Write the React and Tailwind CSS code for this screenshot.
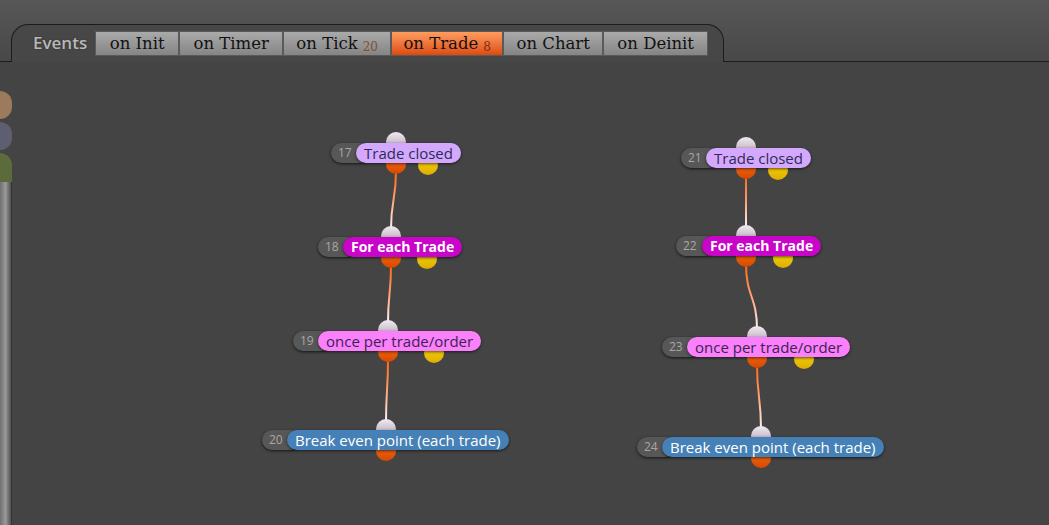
import React from 'react';

const OY = 62; // canvas top in page coords

const nodes = [
    { id: 17, numX: 331, labelX: 356, top: 143, cx: 396, yx: 428, text: 'Trade closed', kind: 'closed' },
    { id: 18, numX: 318, labelX: 343, top: 237, cx: 391, yx: 427, text: 'For each Trade', kind: 'loop' },
    { id: 19, numX: 293, labelX: 318, top: 331, cx: 388, yx: 434, text: 'once per trade/order', kind: 'once' },
    { id: 20, numX: 262, labelX: 287, top: 430, cx: 386, yx: null, text: 'Break even point (each trade)', kind: 'action' },
    { id: 21, numX: 681, labelX: 706, top: 148, cx: 746, yx: 778, text: 'Trade closed', kind: 'closed' },
    { id: 22, numX: 676, labelX: 702, top: 236, cx: 746, yx: 783, text: 'For each Trade', kind: 'loop' },
    { id: 23, numX: 662, labelX: 687, top: 337, cx: 757, yx: 804, text: 'once per trade/order', kind: 'once' },
    { id: 24, numX: 637, labelX: 662, top: 437, cx: 761, yx: null, text: 'Break even point (each trade)', kind: 'action' },
];

const links = [[17, 18], [18, 19], [19, 20], [21, 22], [22, 23], [23, 24]];

const labelStyles = {
    closed: 'bg-[#d4a9fd] text-[#2c2c58] text-[15px]',
    loop: 'bg-[#c805c8] text-white font-bold text-[14px]',
    once: 'bg-[#fb80fb] text-[#3a2450] text-[15px]',
    action: 'bg-[#4581b6] text-white text-[15px]',
};

const tabs = [
    { name: 'on Init', w: 'w-[84px]' },
    { name: 'on Timer', w: 'w-[104px]' },
    { name: 'on Tick', w: 'w-[108px]', count: 20 },
    { name: 'on Trade', w: 'w-[112px]', count: 8, active: true },
    { name: 'on Chart', w: 'w-[100px]' },
    { name: 'on Deinit', w: 'w-[105px]' },
];

const byId = (id) => nodes.find(n => n.id === id);

const Node = ({ node }) => {
    const top = node.top - OY;
    return (
        <>
            {/* input connector */}
            <div
                className="absolute w-[20px] h-[20px] rounded-full bg-linear-to-b from-[#f2eaf2] to-[#a999ab]"
                style={{ left: node.cx - 10, top: top - 11 }}
            />
            {/* output connectors */}
            <div
                className="absolute w-[20px] h-[20px] rounded-full bg-linear-to-b from-[#ff7418] to-[#d64800]"
                style={{ left: node.cx - 10, top: top + 11 }}
            />
            {node.yx && (
                <div
                    className="absolute w-[20px] h-[20px] rounded-full bg-linear-to-b from-[#ffdc10] to-[#dcae00]"
                    style={{ left: node.yx - 10, top: top + 12 }}
                />
            )}
            <div className="absolute flex items-center h-[20px]" style={{ left: node.numX, top }}>
                <div
                    className="h-[20px] rounded-full bg-[#575757] text-[#a8a8a8] text-[12px] leading-[20px] pl-[7px] shadow-[0_1px_3px_rgba(0,0,0,0.7)]"
                    style={{ width: node.labelX - node.numX + 14 }}
                >
                    {node.id}
                </div>
                <div
                    className={`relative -ml-[14px] h-[20px] rounded-full px-[8px] leading-[20px] whitespace-nowrap shadow-[0_1px_3px_rgba(0,0,0,0.6)] ${labelStyles[node.kind]}`}
                >
                    {node.text}
                </div>
            </div>
        </>
    );
};

export default function App() {
    return (
        <div className="w-[1049px] h-[525px] overflow-hidden flex flex-col bg-[#444444] font-['Open_Sans',sans-serif]">
            {/* Header with Events tab */}
            <div className="h-[62px] flex items-end bg-linear-to-b from-[#575757] to-[#484848]">
                <div className="w-[11px] h-full border-b border-[#1c1c1c]" />
                <div className="w-[713px] h-[38px] border-t border-x border-[#1c1c1c] rounded-t-[17px] bg-[#474747] flex items-start pt-[6px] pl-[21px]">
                    <span className="text-[17px] leading-[24px] font-semibold text-[#b9b9b9] [text-shadow:0_0_2px_rgba(0,0,0,0.4)] mr-[8px]">
                        Events
                    </span>
                    <div className="flex">
                        {tabs.map(t => (
                            <div
                                key={t.name}
                                className={`${t.w} h-[25px] flex items-center justify-center border border-[#5a5a5a] font-['DejaVu_Serif',serif] text-[16.5px] leading-[22px] text-[#111] ${
                                    t.active
                                        ? 'bg-linear-to-b from-[#ff9c5e] to-[#dc4a0a]'
                                        : 'bg-linear-to-b from-[#aaaaaa] to-[#858585]'
                                }`}
                            >
                                {t.name}
                                {t.count && (
                                    <span className={`ml-[5px] text-[12px] mt-[6px] ${t.active ? 'text-[#7e3010]' : 'text-[#7c5030]'}`}>
                                        {t.count}
                                    </span>
                                )}
                            </div>
                        ))}
                    </div>
                </div>
                <div className="flex-1 h-full border-b border-[#1c1c1c]" />
            </div>

            {/* Canvas */}
            <div className="relative flex-1">
                {/* left palette strip */}
                <div className="absolute left-0 top-0 bottom-0 w-[12px] flex flex-col pt-[29px] gap-[3px]">
                    <div className="h-[28px] rounded-r-full bg-[#9b7b5c]" />
                    <div className="h-[28px] rounded-r-full bg-[#5e5e71]" />
                    <div className="flex-1 flex flex-col">
                        <div className="h-[29px] rounded-tr-full bg-[#5c6b3b]" />
                        <div className="flex-1 bg-linear-to-r from-[#707070] via-[#9a9a9a] to-[#505050] border-r border-[#333]" />
                    </div>
                </div>

                {/* links */}
                <svg className="absolute inset-0" width="1049" height="463">
                    <defs>
                        {links.map(([a, b]) => {
                            const na = byId(a), nb = byId(b);
                            return (
                                <linearGradient
                                    key={a}
                                    id={`lg${a}`}
                                    gradientUnits="userSpaceOnUse"
                                    x1="0" y1={na.top - OY + 30} x2="0" y2={nb.top - OY - 10}
                                >
                                    <stop offset="0" stopColor="#ff6a14" />
                                    <stop offset="0.45" stopColor="#ff9a6a" />
                                    <stop offset="1" stopColor="#fff0f0" />
                                </linearGradient>
                            );
                        })}
                    </defs>
                    {links.map(([a, b]) => {
                        const na = byId(a), nb = byId(b);
                        const x1 = na.cx, y1 = na.top - OY + 28;
                        const x2 = nb.cx, y2 = nb.top - OY - 8;
                        const dy = (y2 - y1) / 2;
                        return (
                            <path
                                key={a}
                                d={`M ${x1} ${y1} C ${x1} ${y1 + dy} ${x2} ${y2 - dy} ${x2} ${y2}`}
                                fill="none"
                                stroke={`url(#lg${a})`}
                                strokeWidth="2"
                            />
                        );
                    })}
                </svg>

                {nodes.map(n => <Node key={n.id} node={n} />)}
            </div>
        </div>
    );
}
